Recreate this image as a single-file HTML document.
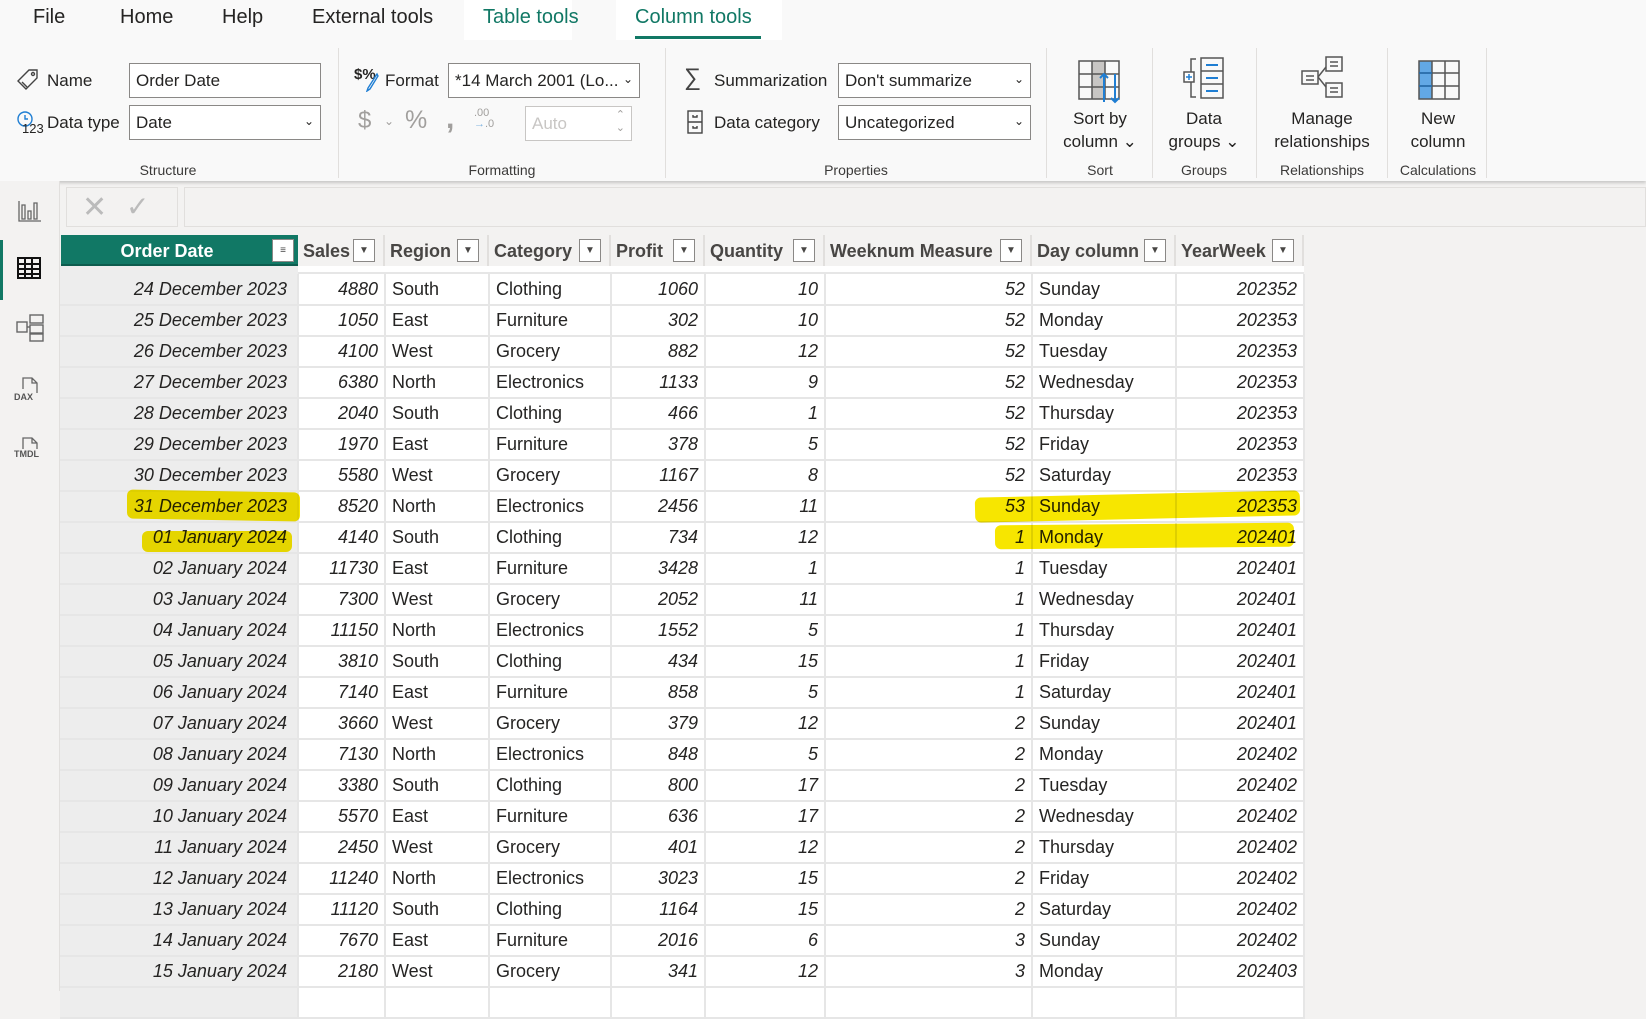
<!DOCTYPE html>
<html><head><meta charset="utf-8"><style>
*{box-sizing:border-box;margin:0;padding:0}
body{width:1646px;height:991px;overflow:hidden;background:#f3f2f1;font-family:"Liberation Sans",sans-serif;color:#252423;position:relative}
.a{position:absolute}
.tab{position:absolute;top:6px;font-size:20px;color:#252423}
.rib{position:absolute;left:0;top:0;width:1646px;height:181px;background:#f9f9f9;box-shadow:0 2px 3px rgba(0,0,0,.18)}
.lbl{position:absolute;font-size:17px;color:#252423;white-space:nowrap}
.grp{position:absolute;top:162px;font-size:14px;color:#3b3a39;text-align:center}
.sep{position:absolute;top:48px;width:1px;height:130px;background:#e1dfdd}
.inp{position:absolute;background:#fff;border:1px solid #8a8886;font-size:17px;padding:7px 6px;height:35px;white-space:nowrap;overflow:hidden}
.chev{position:absolute;right:6px;top:8px;font-size:12px}
.big{position:absolute;font-size:17px;text-align:center;line-height:23px;color:#252423}
table{position:absolute;left:60px;top:274px;border-collapse:collapse;table-layout:fixed;font-size:18px}
td{height:31px;border-right:2px solid #e6e6e6;border-bottom:2px solid #e6e6e6;background:#fff;padding:0 6px;white-space:nowrap;color:#252423}
td.n{text-align:right;font-style:italic}
td.d{text-align:right;font-style:italic;background:#ededed;padding-right:10px}
.hd{position:absolute;top:235px;height:31px;background:#f3f2f1;border-right:2px solid #e1dfdd;font-size:18px;font-weight:bold;color:#484644;padding:6px 5px;white-space:nowrap}
.dd{position:absolute;top:4px;width:22px;height:23px;background:#fff;border:1px solid #8a8886;font-size:10px;text-align:center;line-height:21px;color:#484644;font-weight:normal}
.hl{position:absolute;background:#f7e600;mix-blend-mode:multiply;border-radius:6px}
</style></head><body>
<div class="rib"></div>
<div class="a" style="left:464px;top:0;width:108px;height:40px;background:#fff"></div>
<div class="a" style="left:616px;top:0;width:166px;height:40px;background:#fff"></div>
<div class="tab" style="left:33px">File</div>
<div class="tab" style="left:120px">Home</div>
<div class="tab" style="left:222px">Help</div>
<div class="tab" style="left:312px">External tools</div>
<div class="tab" style="left:483px;color:#117865">Table tools</div>
<div class="tab" style="left:635px;color:#117865">Column tools</div>
<div class="a" style="left:635px;top:36px;width:126px;height:3px;background:#117865"></div>

<!-- Structure -->
<svg class="a" style="left:16px;top:68px" width="24" height="24" viewBox="0 0 24 24" fill="none" stroke="#444" stroke-width="1.4"><path d="M13 2h8v8L10 21 2 13z"/><circle cx="17" cy="6" r="1.5"/><path d="M6 14l5 5"/></svg>
<div class="lbl" style="left:47px;top:71px">Name</div>
<div class="inp" style="left:129px;top:63px;width:192px">Order Date</div>
<svg class="a" style="left:16px;top:110px" width="26" height="28" viewBox="0 0 26 28" fill="none" stroke="#1f7ed3" stroke-width="1.4"><circle cx="9" cy="9" r="7"/><path d="M9 5v4h3"/></svg>
<div class="a" style="left:22px;top:121px;font-size:13px;color:#252423">123</div>
<div class="lbl" style="left:47px;top:113px">Data type</div>
<div class="inp" style="left:129px;top:105px;width:192px">Date<span class="chev">&#8964;</span></div>
<div class="grp" style="left:110px;width:116px">Structure</div>
<div class="sep" style="left:338px"></div>

<!-- Formatting -->
<div class="a" style="left:354px;top:66px;font-size:15px;font-weight:bold;color:#252423">$%</div>
<svg class="a" style="left:365px;top:72px" width="14" height="20" viewBox="0 0 14 20"><path d="M12 2L3 16l-1 3 3-2L13 4z" fill="none" stroke="#1f7ed3" stroke-width="1.4"/></svg>
<div class="lbl" style="left:385px;top:71px">Format</div>
<div class="inp" style="left:448px;top:63px;width:192px">*14 March 2001 (Lo...<span class="chev">&#8964;</span></div>
<div class="a" style="left:358px;top:107px;font-size:24px;color:#a19f9d">$</div>
<div class="a" style="left:384px;top:114px;font-size:12px;color:#a19f9d">&#8964;</div>
<div class="a" style="left:405px;top:106px;font-size:25px;color:#a19f9d">%</div>
<div class="a" style="left:446px;top:102px;font-size:30px;color:#a19f9d;font-weight:bold">,</div>
<div class="a" style="left:474px;top:108px;font-size:11px;color:#a19f9d;line-height:11px">.00<br><span style="color:#7fb3e0">&#8594;</span>.0</div>
<div class="inp" style="left:525px;top:106px;width:107px;color:#c8c6c4;border-color:#c8c6c4">Auto<span class="a" style="right:6px;top:2px;font-size:11px;color:#a19f9d;line-height:13px">&#8963;<br>&#8964;</span></div>
<div class="grp" style="left:440px;width:124px">Formatting</div>
<div class="sep" style="left:665px"></div>

<!-- Properties -->
<div class="a" style="left:684px;top:64px;font-size:24px;color:#444">&#8721;</div>
<div class="lbl" style="left:714px;top:71px">Summarization</div>
<div class="inp" style="left:838px;top:63px;width:193px">Don't summarize<span class="chev">&#8964;</span></div>
<svg class="a" style="left:686px;top:110px" width="18" height="24" viewBox="0 0 18 24" fill="none" stroke="#444" stroke-width="1.4"><rect x="2" y="1" width="14" height="22"/><path d="M2 12h14M7 5v2h4V5M7 16v2h4v-2"/></svg>
<div class="lbl" style="left:714px;top:113px">Data category</div>
<div class="inp" style="left:838px;top:105px;width:193px">Uncategorized<span class="chev">&#8964;</span></div>
<div class="grp" style="left:800px;width:112px">Properties</div>
<div class="sep" style="left:1046px"></div>

<!-- Sort -->
<svg class="a" style="left:1078px;top:60px" width="46" height="44" viewBox="0 0 46 44" fill="none" stroke="#555" stroke-width="1.5"><rect x="14" y="1" width="13" height="38" fill="#c8c6c4" stroke="none"/><rect x="1" y="1" width="40" height="38"/><path d="M14 1v38M27 1v38M1 14h40M1 27h40"/><path d="M26 42V14m-4 4l4-4 4 4M37 14v28m-4-4l4 4 4-4" stroke="#1f7ed3" stroke-width="2"/></svg>
<div class="big" style="left:1052px;top:107px;width:96px">Sort by<br>column &#8964;</div>
<div class="grp" style="left:1060px;width:80px">Sort</div>
<div class="sep" style="left:1152px"></div>

<svg class="a" style="left:1182px;top:57px" width="44" height="42" viewBox="0 0 44 42" fill="none" stroke="#555" stroke-width="1.5"><path d="M14 2H9v38h5"/><rect x="2" y="15" width="10" height="10" fill="#fff"/><path d="M7 17v6M4 20h6" stroke="#1f7ed3"/><rect x="19" y="1" width="22" height="40"/><path d="M19 14h22M19 27h22M24 8h12M24 21h12M24 34h12" /><path d="M24 8h12M24 21h12M24 34h12" stroke="#1f7ed3" stroke-width="2"/></svg>
<div class="big" style="left:1150px;top:107px;width:108px">Data<br>groups &#8964;</div>
<div class="grp" style="left:1164px;width:80px">Groups</div>
<div class="sep" style="left:1256px"></div>

<svg class="a" style="left:1300px;top:55px" width="44" height="46" viewBox="0 0 44 46" fill="none" stroke="#555" stroke-width="1.5"><rect x="2" y="16" width="16" height="13"/><rect x="26" y="2" width="16" height="14"/><rect x="26" y="28" width="16" height="14"/><path d="M18 22l8-10M18 22l8 10M6 21h8M6 25h8M30 7h8M30 11h8M30 33h8M30 37h8"/></svg>
<div class="big" style="left:1262px;top:107px;width:120px">Manage<br>relationships</div>
<div class="grp" style="left:1262px;width:120px">Relationships</div>
<div class="sep" style="left:1387px"></div>

<svg class="a" style="left:1418px;top:60px" width="42" height="40" viewBox="0 0 42 40"><rect x="1" y="1" width="13" height="38" fill="#62a8e5"/><rect x="1" y="1" width="40" height="38" fill="none" stroke="#555" stroke-width="1.5"/><path d="M14 1v38M27 1v38M1 13h40M1 26h40" stroke="#555" stroke-width="1.5"/><path d="M1 13h13M1 26h13" stroke="#1f6fb5" stroke-width="1.5"/></svg>
<div class="big" style="left:1390px;top:107px;width:96px">New<br>column</div>
<div class="grp" style="left:1390px;width:96px">Calculations</div>
<div class="sep" style="left:1486px"></div>

<!-- sidebar -->
<div class="a" style="left:0;top:181px;width:60px;height:810px;background:#f3f2f1;border-right:1px solid #e1dfdd"></div>
<div class="a" style="left:0;top:240px;width:3px;height:60px;background:#117865"></div>
<svg class="a" style="left:18px;top:199px" width="24" height="24" viewBox="0 0 24 24" fill="none" stroke="#666" stroke-width="1.3"><path d="M1 2v20h22M4 6v14h3V6zM10 12v8h3v-8zM16 4v16h3V4z"/></svg>
<svg class="a" style="left:17px;top:257px" width="24" height="22" viewBox="0 0 24 22" fill="none" stroke="#111" stroke-width="2"><rect x="1" y="1" width="22" height="20"/><path d="M1 7h22M1 12h22M1 17h22M8 1v20M15 1v20"/></svg>
<svg class="a" style="left:16px;top:314px" width="28" height="28" viewBox="0 0 28 28" fill="none" stroke="#666" stroke-width="1.4"><rect x="1" y="8" width="10" height="10"/><rect x="14" y="1" width="13" height="8"/><rect x="14" y="11" width="13" height="8"/><rect x="14" y="20" width="13" height="7"/><path d="M11 13h3"/></svg>
<svg class="a" style="left:18px;top:376px" width="24" height="22" viewBox="0 0 24 22" fill="none" stroke="#666" stroke-width="1.3"><path d="M5 13V2h9l5 5v10M14 2v5h5"/></svg>
<div class="a" style="left:14px;top:392px;font-size:9px;color:#555;font-weight:bold">DAX</div>
<svg class="a" style="left:18px;top:436px" width="24" height="18" viewBox="0 0 24 18" fill="none" stroke="#666" stroke-width="1.3"><path d="M5 13V2h9l5 5v6M14 2v5h5"/></svg>
<div class="a" style="left:14px;top:449px;font-size:9px;color:#555;font-weight:bold">TMDL</div>

<!-- formula bar -->
<div class="a" style="left:66px;top:187px;width:112px;height:40px;background:#f3f2f1;border:1px solid #e1dfdd"></div>
<div class="a" style="left:82px;top:190px;font-size:30px;color:#bbb;font-weight:200">&#10005;</div>
<div class="a" style="left:126px;top:190px;font-size:28px;color:#bbb">&#10003;</div>
<div class="a" style="left:184px;top:187px;width:1462px;height:40px;background:#f3f2f1;border:1px solid #e1dfdd"></div>

<!-- headers -->
<div class="hd" style="left:61px;width:237px;background:#117865;color:#fff;text-align:center;padding-right:30px;border:none;border-bottom:2px solid #0d5c4e">Order Date<div class="dd" style="right:4px;color:#444">&#8801;</div></div>
<div class="hd" style="left:298px;width:87px">Sales<div class="dd" style="right:8px">&#9660;</div></div>
<div class="hd" style="left:385px;width:104px">Region<div class="dd" style="right:8px">&#9660;</div></div>
<div class="hd" style="left:489px;width:122px">Category<div class="dd" style="right:8px">&#9660;</div></div>
<div class="hd" style="left:611px;width:94px">Profit<div class="dd" style="right:8px">&#9660;</div></div>
<div class="hd" style="left:705px;width:120px">Quantity<div class="dd" style="right:8px">&#9660;</div></div>
<div class="hd" style="left:825px;width:207px">Weeknum Measure<div class="dd" style="right:8px">&#9660;</div></div>
<div class="hd" style="left:1032px;width:144px">Day column<div class="dd" style="right:8px">&#9660;</div></div>
<div class="hd" style="left:1176px;width:128px">YearWeek<div class="dd" style="right:8px">&#9660;</div></div>
<div class="a" style="left:60px;top:266px;width:1244px;height:8px;background:#fff;border-bottom:2px solid #e6e6e6"></div>
<div class="a" style="left:60px;top:266px;width:238px;height:8px;background:#ededed"></div>

<table>
<colgroup><col style="width:238px"><col style="width:87px"><col style="width:104px"><col style="width:122px"><col style="width:94px"><col style="width:120px"><col style="width:207px"><col style="width:144px"><col style="width:128px"></colgroup>
<tr><td class="d">24 December 2023</td><td class="n">4880</td><td>South</td><td>Clothing</td><td class="n">1060</td><td class="n">10</td><td class="n">52</td><td>Sunday</td><td class="n">202352</td></tr>
<tr><td class="d">25 December 2023</td><td class="n">1050</td><td>East</td><td>Furniture</td><td class="n">302</td><td class="n">10</td><td class="n">52</td><td>Monday</td><td class="n">202353</td></tr>
<tr><td class="d">26 December 2023</td><td class="n">4100</td><td>West</td><td>Grocery</td><td class="n">882</td><td class="n">12</td><td class="n">52</td><td>Tuesday</td><td class="n">202353</td></tr>
<tr><td class="d">27 December 2023</td><td class="n">6380</td><td>North</td><td>Electronics</td><td class="n">1133</td><td class="n">9</td><td class="n">52</td><td>Wednesday</td><td class="n">202353</td></tr>
<tr><td class="d">28 December 2023</td><td class="n">2040</td><td>South</td><td>Clothing</td><td class="n">466</td><td class="n">1</td><td class="n">52</td><td>Thursday</td><td class="n">202353</td></tr>
<tr><td class="d">29 December 2023</td><td class="n">1970</td><td>East</td><td>Furniture</td><td class="n">378</td><td class="n">5</td><td class="n">52</td><td>Friday</td><td class="n">202353</td></tr>
<tr><td class="d">30 December 2023</td><td class="n">5580</td><td>West</td><td>Grocery</td><td class="n">1167</td><td class="n">8</td><td class="n">52</td><td>Saturday</td><td class="n">202353</td></tr>
<tr><td class="d">31 December 2023</td><td class="n">8520</td><td>North</td><td>Electronics</td><td class="n">2456</td><td class="n">11</td><td class="n">53</td><td>Sunday</td><td class="n">202353</td></tr>
<tr><td class="d">01 January 2024</td><td class="n">4140</td><td>South</td><td>Clothing</td><td class="n">734</td><td class="n">12</td><td class="n">1</td><td>Monday</td><td class="n">202401</td></tr>
<tr><td class="d">02 January 2024</td><td class="n">11730</td><td>East</td><td>Furniture</td><td class="n">3428</td><td class="n">1</td><td class="n">1</td><td>Tuesday</td><td class="n">202401</td></tr>
<tr><td class="d">03 January 2024</td><td class="n">7300</td><td>West</td><td>Grocery</td><td class="n">2052</td><td class="n">11</td><td class="n">1</td><td>Wednesday</td><td class="n">202401</td></tr>
<tr><td class="d">04 January 2024</td><td class="n">11150</td><td>North</td><td>Electronics</td><td class="n">1552</td><td class="n">5</td><td class="n">1</td><td>Thursday</td><td class="n">202401</td></tr>
<tr><td class="d">05 January 2024</td><td class="n">3810</td><td>South</td><td>Clothing</td><td class="n">434</td><td class="n">15</td><td class="n">1</td><td>Friday</td><td class="n">202401</td></tr>
<tr><td class="d">06 January 2024</td><td class="n">7140</td><td>East</td><td>Furniture</td><td class="n">858</td><td class="n">5</td><td class="n">1</td><td>Saturday</td><td class="n">202401</td></tr>
<tr><td class="d">07 January 2024</td><td class="n">3660</td><td>West</td><td>Grocery</td><td class="n">379</td><td class="n">12</td><td class="n">2</td><td>Sunday</td><td class="n">202401</td></tr>
<tr><td class="d">08 January 2024</td><td class="n">7130</td><td>North</td><td>Electronics</td><td class="n">848</td><td class="n">5</td><td class="n">2</td><td>Monday</td><td class="n">202402</td></tr>
<tr><td class="d">09 January 2024</td><td class="n">3380</td><td>South</td><td>Clothing</td><td class="n">800</td><td class="n">17</td><td class="n">2</td><td>Tuesday</td><td class="n">202402</td></tr>
<tr><td class="d">10 January 2024</td><td class="n">5570</td><td>East</td><td>Furniture</td><td class="n">636</td><td class="n">17</td><td class="n">2</td><td>Wednesday</td><td class="n">202402</td></tr>
<tr><td class="d">11 January 2024</td><td class="n">2450</td><td>West</td><td>Grocery</td><td class="n">401</td><td class="n">12</td><td class="n">2</td><td>Thursday</td><td class="n">202402</td></tr>
<tr><td class="d">12 January 2024</td><td class="n">11240</td><td>North</td><td>Electronics</td><td class="n">3023</td><td class="n">15</td><td class="n">2</td><td>Friday</td><td class="n">202402</td></tr>
<tr><td class="d">13 January 2024</td><td class="n">11120</td><td>South</td><td>Clothing</td><td class="n">1164</td><td class="n">15</td><td class="n">2</td><td>Saturday</td><td class="n">202402</td></tr>
<tr><td class="d">14 January 2024</td><td class="n">7670</td><td>East</td><td>Furniture</td><td class="n">2016</td><td class="n">6</td><td class="n">3</td><td>Sunday</td><td class="n">202402</td></tr>
<tr><td class="d">15 January 2024</td><td class="n">2180</td><td>West</td><td>Grocery</td><td class="n">341</td><td class="n">12</td><td class="n">3</td><td>Monday</td><td class="n">202403</td></tr>
<tr><td class="d"></td><td></td><td></td><td></td><td></td><td></td><td></td><td></td><td></td></tr>
</table>

<!-- highlights -->
<div class="hl" style="left:127px;top:491px;width:173px;height:29px;transform:skewY(1deg)"></div>
<div class="hl" style="left:142px;top:531px;width:150px;height:21px"></div>
<div class="hl" style="left:975px;top:494px;width:325px;height:25px;transform:rotate(-1.3deg)"></div>
<div class="hl" style="left:995px;top:524px;width:299px;height:24px;transform:rotate(-0.5deg)"></div>
</body></html>
